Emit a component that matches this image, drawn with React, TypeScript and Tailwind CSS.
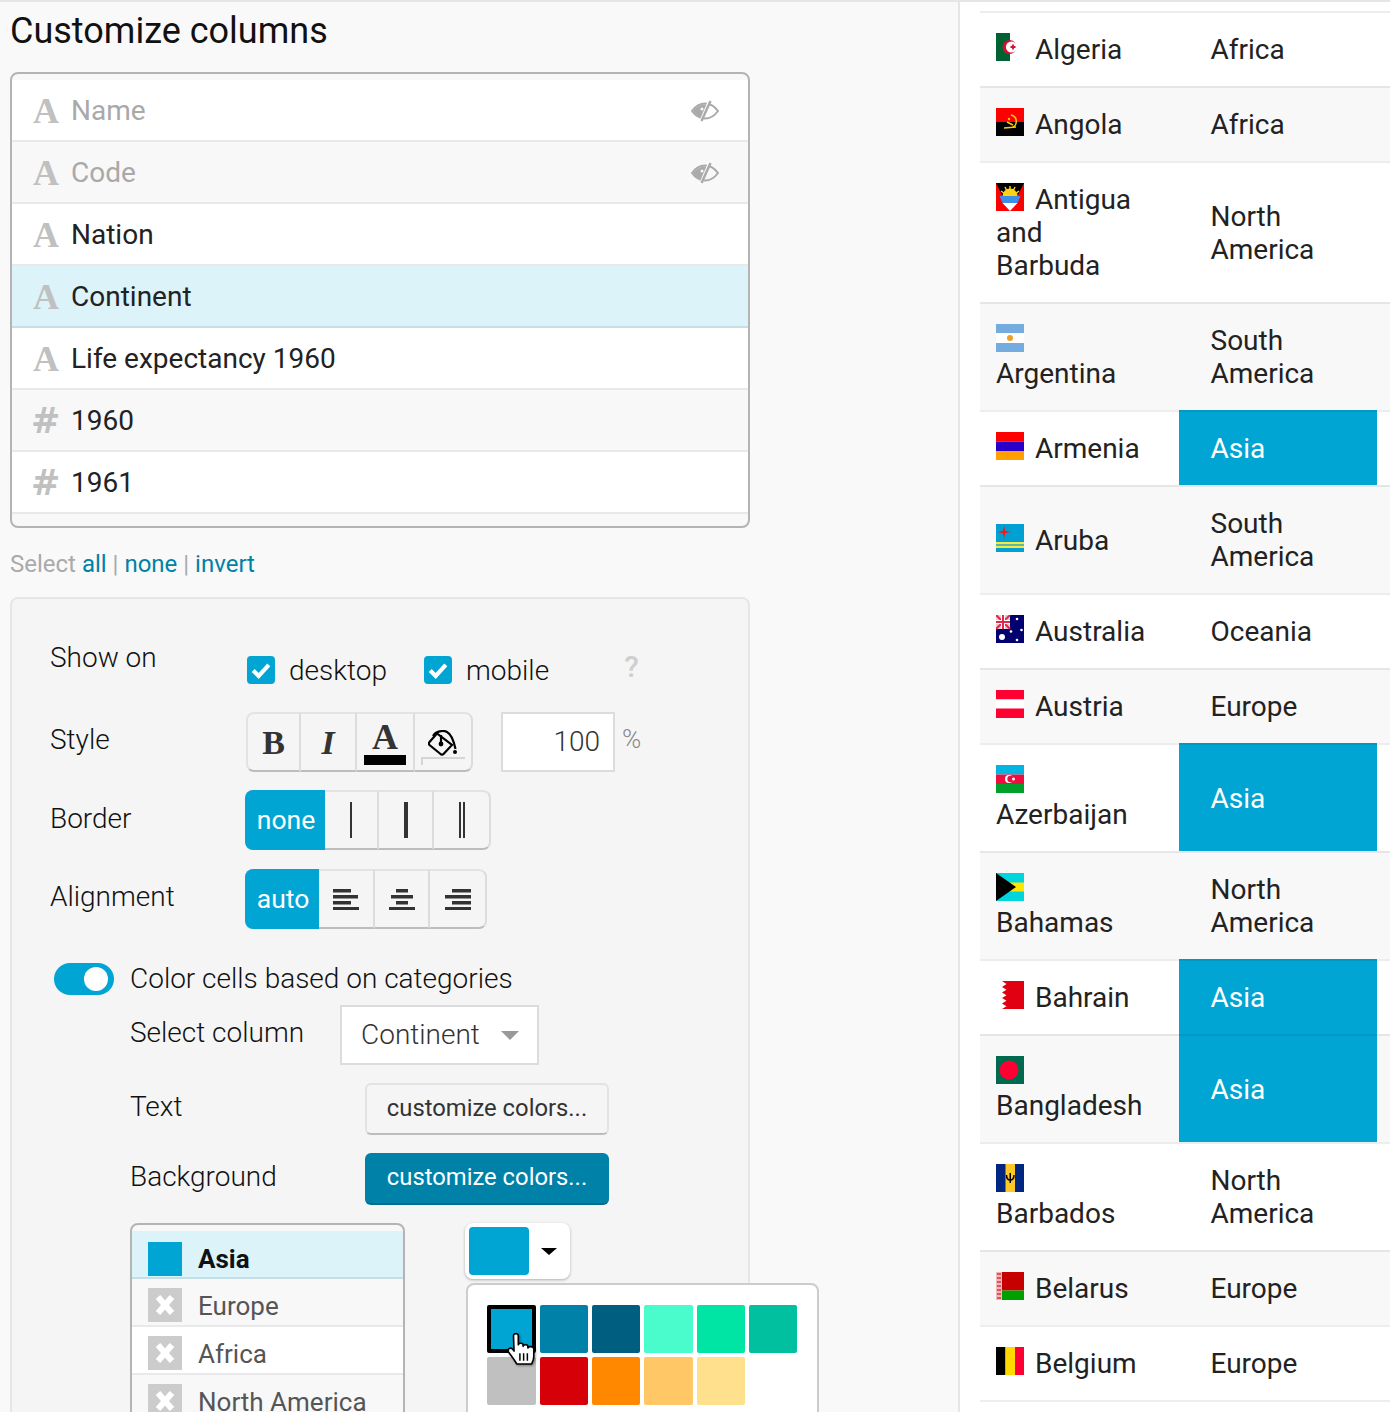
import type { ReactNode } from 'react';

type Country = { name: string; continent: string; flag: ReactNode };

const BLUE = '#00a5d3';

function FlagBox({ children }: { children: ReactNode }) {
  return (
    <svg viewBox="0 0 28 28" className="mr-[11px] inline-block h-[28px] w-[28px] align-[-2px]">
      {children}
    </svg>
  );
}

const countries: Country[] = [
  {
    name: 'Algeria',
    continent: 'Africa',
    flag: (
      <>
        <rect width="14" height="28" fill="#006233" />
        <rect x="14" width="14" height="28" fill="#fff" />
        <circle cx="13.500" cy="14" r="7" fill="#d21034" />
        <circle cx="15.500" cy="14" r="5.600" fill="#fff" />
        <path d="M14.500 14h5M17 11.500v5" stroke="#d21034" strokeWidth="1.800" />
      </>
    ),
  },
  {
    name: 'Angola',
    continent: 'Africa',
    flag: (
      <>
        <rect width="28" height="14" fill="#ff0000" />
        <rect y="14" width="28" height="14" fill="#000" />
        <path d="M15 7a6.500 6.500 0 0 1 1 12.500M8 20l12-1M11 14l6 3" stroke="#ffcb00" strokeWidth="1.500" fill="none" />
        <circle cx="13" cy="11" r="1.200" fill="#ffcb00" />
      </>
    ),
  },
  {
    name: 'Antigua and Barbuda',
    continent: 'North America',
    flag: (
      <>
        <rect width="28" height="28" fill="#ff0000" />
        <path d="M0 0h28L14 28z" fill="#000" />
        <path d="M6.500 13a7.500 7.500 0 0 1 15 0z" fill="#fcd116" />
        <path d="M5 8l4 3M23 8l-4 3M14 3v5M9 4l2 4M19 4l-2 4" stroke="#fcd116" strokeWidth="1.500" />
        <path d="M3.500 13h21l-3 7h-15z" fill="#3b8fe6" />
        <path d="M6.500 20h15L14 28z" fill="#fff" />
      </>
    ),
  },
  {
    name: 'Argentina',
    continent: 'South America',
    flag: (
      <>
        <rect width="28" height="28" fill="#74acdf" />
        <rect y="9" width="28" height="10" fill="#fff" />
        <circle cx="14" cy="14" r="3" fill="#eba12a" />
      </>
    ),
  },
  {
    name: 'Armenia',
    continent: 'Asia',
    flag: (
      <>
        <rect width="28" height="9.500" fill="#ff0000" />
        <rect y="9.500" width="28" height="9.500" fill="#2a00c8" />
        <rect y="19" width="28" height="9" fill="#ff9f00" />
      </>
    ),
  },
  {
    name: 'Aruba',
    continent: 'South America',
    flag: (
      <>
        <rect width="28" height="28" fill="#00a0d2" />
        <rect y="18" width="28" height="2" fill="#f5e94a" />
        <rect y="22" width="28" height="2" fill="#f5e94a" />
        <rect y="20" width="28" height="2" fill="#5fb8a0" />
        <path d="M6.500 1.500l1.200 5.300 5.300 1.200-5.300 1.200-1.200 5.300-1.200-5.300L0 8l5.300-1.200z" fill="#ed1c24" transform="translate(1.500 0)" />
      </>
    ),
  },
  {
    name: 'Australia',
    continent: 'Oceania',
    flag: (
      <>
        <rect width="28" height="28" fill="#00006e" />
        <rect width="14" height="14" fill="#f4c6cf" />
        <path d="M0 0l14 14M14 0L0 14" stroke="#e0284a" strokeWidth="2" />
        <path d="M7 0v14M0 7h14" stroke="#fff" strokeWidth="4" />
        <path d="M7 0v14M0 7h14" stroke="#e0284a" strokeWidth="2" />
        <circle cx="6" cy="22" r="3" fill="#fff" />
        <circle cx="21" cy="4" r="1.300" fill="#fff" />
        <circle cx="25.500" cy="15" r="1.300" fill="#fff" />
        <circle cx="15" cy="16.500" r="1.300" fill="#fff" />
        <circle cx="21" cy="25" r="1.300" fill="#fff" />
      </>
    ),
  },
  {
    name: 'Austria',
    continent: 'Europe',
    flag: (
      <>
        <rect width="28" height="9.500" fill="#ff0033" />
        <rect y="9.500" width="28" height="9" fill="#fff" />
        <rect y="18.500" width="28" height="9.500" fill="#ff0033" />
      </>
    ),
  },
  {
    name: 'Azerbaijan',
    continent: 'Asia',
    flag: (
      <>
        <rect width="28" height="9.500" fill="#00b5e2" />
        <rect y="9.500" width="28" height="9.500" fill="#ef0f3e" />
        <rect y="19" width="28" height="9" fill="#00a02a" />
        <circle cx="13" cy="14" r="4" fill="#fff" />
        <circle cx="14.500" cy="14" r="3.200" fill="#ef0f3e" />
        <circle cx="17.500" cy="14" r="1.500" fill="#fff" />
      </>
    ),
  },
  {
    name: 'Bahamas',
    continent: 'North America',
    flag: (
      <>
        <rect width="28" height="28" fill="#00d4dc" />
        <rect y="9.500" width="28" height="9" fill="#ffe500" />
        <path d="M0 0l20 14L0 28z" fill="#000" />
      </>
    ),
  },
  {
    name: 'Bahrain',
    continent: 'Asia',
    flag: (
      <>
        <rect width="28" height="28" fill="#e10011" />
        <path d="M0 0h6L10.500 3 6 6l4.500 2.800L6 11.500l4.500 2.800L6 17l4.500 2.800L6 22.500l4.500 2.800L6 28H0z" fill="#fff" />
      </>
    ),
  },
  {
    name: 'Bangladesh',
    continent: 'Asia',
    flag: (
      <>
        <rect width="28" height="28" fill="#006a4e" />
        <circle cx="13" cy="14" r="9.500" fill="#ff0033" />
      </>
    ),
  },
  {
    name: 'Barbados',
    continent: 'North America',
    flag: (
      <>
        <rect width="28" height="28" fill="#00267f" />
        <rect x="9.500" width="9.500" height="28" fill="#ffc726" />
        <path d="M14.250 9v10M10.500 11c0 4 1.500 5 3.750 5s3.750-1 3.750-5" stroke="#000" strokeWidth="1.500" fill="none" />
      </>
    ),
  },
  {
    name: 'Belarus',
    continent: 'Europe',
    flag: (
      <>
        <rect width="28" height="18.500" fill="#c60000" />
        <rect y="18.500" width="28" height="9.500" fill="#00a000" />
        <rect width="6" height="28" fill="#f2b8bc" />
        <path d="M1 2h4M1 6h4M1 10h4M1 14h4M1 18h4M1 22h4M1 26h4" stroke="#d4343f" strokeWidth="1.600" />
      </>
    ),
  },
  {
    name: 'Belgium',
    continent: 'Europe',
    flag: (
      <>
        <rect width="9.500" height="28" fill="#000" />
        <rect x="9.500" width="9.500" height="28" fill="#ffd900" />
        <rect x="19" width="9" height="28" fill="#ff0033" />
      </>
    ),
  },
];

function TypeIcon({ kind }: { kind: 'text' | 'number' }) {
  if (kind === 'number') {
    return <span className="-ml-[2px] w-[40px] text-[35px] font-bold leading-none text-[#c0c0c0] [font-family:'DejaVu_Sans',sans-serif]">#</span>;
  }
  return <span className="w-[38px] text-[36px] font-bold leading-none text-[#c0c0c0] [font-family:'Liberation_Serif',serif]">A</span>;
}

function HiddenEye() {
  return (
    <svg viewBox="0 0 28 22" className="-ml-[1px] h-[22px] w-[28px]">
      <path d="M1 11C5 5.500 9 3.500 14 3.500S23 5.500 27 11C23 16.500 19 18.500 14 18.500S5 16.500 1 11z" fill="none" stroke="#aaa" strokeWidth="2" />
      <path d="M2 11C6 6 10 4.500 15 4.500c.6 5-.5 9.500-2.500 13.500C8 17.500 5 15.500 2 11z" fill="#aaa" />
      <circle cx="11" cy="9" r="1.500" fill="#f8f8f8" />
      <path d="M19 0L9.500 22" stroke="#fff" strokeWidth="3" />
      <path d="M19.500 1L10.500 21" stroke="#aaa" strokeWidth="2.500" />
    </svg>
  );
}

function ColumnRow({
  label,
  kind,
  alt,
  hidden,
  active,
}: {
  label: string;
  kind: 'text' | 'number';
  alt?: boolean;
  hidden?: boolean;
  active?: boolean;
}) {
  const bg = active
    ? 'bg-[#dcf3fa] border-[#c5dfe8]'
    : alt
      ? 'bg-[#f8f8f8] border-[#e9e9e9]'
      : 'bg-white border-[#e9e9e9]';
  return (
    <div className={`flex h-[62px] shrink-0 items-center border-b-2 pl-[21px] pr-[29px] pt-[2px] ${bg}`}>
      <TypeIcon kind={kind} />
      <span className={`flex-1 text-[28px] ${hidden ? 'text-[#a9a9a9]' : 'text-[#222]'}`}>{label}</span>
      {hidden && <HiddenEye />}
    </div>
  );
}

function FormRow({ label, className, labelClass, children }: { label: string; className: string; labelClass?: string; children: ReactNode }) {
  return (
    <div className={`flex items-start ${className}`}>
      <div className={`w-[233px] pl-[38px] text-[28px] font-light leading-[33px] text-[#111] ${labelClass ?? ''}`}>{label}</div>
      {children}
    </div>
  );
}

function Check({ label }: { label: string }) {
  return (
    <div className="flex items-center">
      <span className="flex h-[28px] w-[28px] items-center justify-center rounded-[4px] bg-[#00a5d3]">
        <svg viewBox="0 0 24 24" className="h-[22px] w-[22px]" fill="none" stroke="#fff" strokeWidth="4.500">
          <path d="M3.500 12.500l6 6L20.500 6.500" />
        </svg>
      </span>
      <span className="ml-[14px] mt-[2px] text-[28px] font-light leading-[33px] text-[#111]">{label}</span>
    </div>
  );
}

function GroupCell({ w, first, last, active, children }: { w: string; first?: boolean; last?: boolean; active?: boolean; children: ReactNode }) {
  return (
    <div
      className={`flex h-[60px] items-center justify-center ${w} ${first ? 'rounded-l-[8px]' : ''} ${last ? 'rounded-r-[8px]' : ''} ${
        active
          ? 'bg-[#00a5d3] pl-[2px] text-[26.5px] text-white'
          : `border-y-2 border-t-[#e3e3e3] border-b-[#bdbdbd] border-r-2 border-r-[#dcdcdc] bg-[#f5f5f5] text-[#333] ${first ? 'border-l-2 border-l-[#e3e3e3]' : ''}`
      }`}
    >
      {children}
    </div>
  );
}

function AlignIcon({ rows }: { rows: [number, number][] }) {
  return (
    <svg viewBox="0 0 26 21" className="h-[21px] w-[26px]">
      {rows.map(([x, w], i) => (
        <rect key={i} x={x} y={i * 6} width={w} height="3.500" fill="#333" />
      ))}
    </svg>
  );
}

function CategoryRow({ label, alt }: { label: string; alt?: boolean }) {
  return (
    <div className={`flex h-[48px] shrink-0 items-end border-b-2 border-[#e9e9e9] pb-[3px] pl-[16px] ${alt ? 'bg-[#f8f8f8]' : 'bg-white'}`}>
      <span className="flex h-[34px] w-[34px] items-center justify-center bg-[#cccccc]">
        <svg viewBox="0 0 24 24" className="h-[24px] w-[24px]" stroke="#fff" strokeWidth="6">
          <path d="M5 4l14 16M19 4L5 20" />
        </svg>
      </span>
      <span className="ml-[16px] h-[34px] text-[26px] leading-[36px] text-[#555]">{label}</span>
    </div>
  );
}

function Swatch({ color, w, selected }: { color: string; w: string; selected?: boolean }) {
  return (
    <div
      className={`h-[48px] rounded-[2px] ${w} ${selected ? 'border-[4px] border-black' : ''}`}
      style={{ backgroundColor: color }}
    />
  );
}

function HandCursor() {
  return (
    <svg viewBox="0 0 27 30" className="absolute left-[20px] top-[28px] h-[32px] w-[29px] drop-shadow-[1px_1px_1px_rgba(0,0,0,0.4)]">
      <path
        d="M6 2.500C6 0 10.500 0 10.500 2.500V11C11 9 15 9 15 11.500V12.500C15.500 10.500 19.500 10.500 19.500 13V14C20 12 25 12.500 25 15V22C25 25 24 27 23 29H9C8 27 6 24 1.500 18C0 15 3 13 5 15L6.500 17Z"
        fill="#fff"
        stroke="#000"
        strokeWidth="1.500"
        strokeLinejoin="round"
      />
      <path d="M12 19v7M15.500 19v7M19 19v7" stroke="#000" strokeWidth="1.400" />
    </svg>
  );
}

export default function App() {
  return (
    <div className="flex h-[1412px] w-[1390px] overflow-hidden border-t-2 border-[#e6e6e6] bg-[#f9f9f9] [font-family:Roboto,sans-serif]">
      <div className="h-full w-[958px] shrink-0 pl-[10px]">
        <h1 className="mt-[8px] text-[36px] font-normal leading-[42px] text-[#111]">Customize columns</h1>

        <div className="mt-[20px] flex h-[456px] w-[740px] flex-col overflow-hidden rounded-[8px] border-2 border-[#b4b4b4] bg-[#f8f8f8] pt-[6px]">
          <ColumnRow label="Name" kind="text" hidden />
          <ColumnRow label="Code" kind="text" alt hidden />
          <ColumnRow label="Nation" kind="text" />
          <ColumnRow label="Continent" kind="text" active />
          <ColumnRow label="Life expectancy 1960" kind="text" />
          <ColumnRow label="1960" kind="number" alt />
          <ColumnRow label="1961" kind="number" />
        </div>

        <div className="mt-[21px] text-[24px] leading-[30px] text-[#aaa]">
          Select <a className="text-[#0081a7]">all</a> | <a className="text-[#0081a7]">none</a> | <a className="text-[#0081a7]">invert</a>
        </div>

        <div className="relative mt-[18px] h-[840px] w-[740px] rounded-[8px] border-2 border-[#e6e6e6] bg-[#f5f5f5]">
          <FormRow label="Show on" className="pt-[42px]">
            <div className="mt-[9px] flex items-center">
              <div className="ml-[2px] w-[177px]"><Check label="desktop" /></div>
              <Check label="mobile" />
              <span className="-mt-[6px] ml-[75px] text-[30px] font-medium text-[#cfcfcf]">?</span>
            </div>
          </FormRow>

          <FormRow label="Style" className="mt-[23px]" labelClass="mt-[11px]">
            <div className="ml-[1px] flex items-start">
              <div className="flex rounded-[8px] [font-family:'Liberation_Serif',serif]">
                <GroupCell w="w-[55px]" first><span className="text-[34px] font-bold">B</span></GroupCell>
                <GroupCell w="w-[56px]"><span className="text-[34px] font-bold italic">I</span></GroupCell>
                <GroupCell w="w-[58px]">
                  <span className="flex flex-col items-center pt-[2px]">
                    <span className="text-[36px] font-bold leading-[30px]">A</span>
                    <span className="mt-[3px] h-[10px] w-[42px] bg-black" />
                  </span>
                </GroupCell>
                <GroupCell w="w-[58px]" last>
                  <span className="relative flex h-[46px] w-[44px] items-start justify-center">
                    <svg viewBox="0 0 30 26" className="mt-[11px] h-[26px] w-[30px]" fill="none" stroke="#000" strokeWidth="2.200">
                      <path d="M1.500 12L9 3.500 24 15l-8.500 9a2 2 0 0 1-3 0L1.500 15a2 2 0 0 1 0-3z" fill="#f5f5f5" />
                      <path d="M5 6C8 1 15 0 19 2s7 10 8.500 17" />
                      <path d="M13 5v8" />
                      <circle cx="13" cy="14" r="1.300" fill="#000" />
                      <circle cx="27" cy="22" r="2" fill="#000" stroke="none" />
                    </svg>
                    <span className="absolute bottom-0 h-[8px] w-full border-l-2 border-t-2 border-[#d5d5d5]" />
                  </span>
                </GroupCell>
              </div>
              <div className="ml-[28px] flex h-[60px] w-[114px] items-center justify-end border-2 border-[#dcdcdc] bg-white pr-[13px] text-[28px] font-light text-[#333]">
                100
              </div>
              <span className="ml-[7px] mt-[8px] text-[26px] font-light text-[#888]">%</span>
            </div>
          </FormRow>

          <FormRow label="Border" className="mt-[18px]" labelClass="mt-[12px]">
            <div className="flex">
              <GroupCell w="w-[80px]" first active>none</GroupCell>
              <GroupCell w="w-[54px]"><span className="h-[36px] w-[2px] bg-[#333]" /></GroupCell>
              <GroupCell w="w-[55px]"><span className="h-[36px] w-[4px] bg-[#333]" /></GroupCell>
              <GroupCell w="w-[57px]" last>
                <span className="h-[36px] w-[6px] border-x-2 border-[#333]" />
              </GroupCell>
            </div>
          </FormRow>

          <FormRow label="Alignment" className="mt-[19px]" labelClass="mt-[11px]">
            <div className="flex">
              <GroupCell w="w-[74px]" first active>auto</GroupCell>
              <GroupCell w="w-[56px]"><AlignIcon rows={[[0, 18], [0, 25], [0, 18], [0, 26]]} /></GroupCell>
              <GroupCell w="w-[55px]"><AlignIcon rows={[[7, 12], [2, 22], [7, 12], [0, 26]]} /></GroupCell>
              <GroupCell w="w-[57px]" last><AlignIcon rows={[[7, 19], [0, 26], [7, 19], [0, 26]]} /></GroupCell>
            </div>
          </FormRow>

          <div className="mt-[33px] flex items-center pl-[42px]">
            <span className="flex h-[32px] w-[60px] items-center justify-end rounded-full bg-[#00a5d3] pr-[6px]">
              <span className="h-[24px] w-[24px] rounded-full bg-white" />
            </span>
            <span className="ml-[16px] text-[28px] font-light leading-[33px] text-[#111]">Color cells based on categories</span>
          </div>

          <div className="mt-[10px] flex items-start pl-[118px]">
            <div className="mt-[11px] w-[210px] text-[28px] font-light leading-[33px] text-[#111]">Select column</div>
            <div className="flex h-[60px] w-[199px] items-center border-2 border-[#dcdcdc] bg-white pl-[19px] text-[28px] font-light text-[#333]">
              Continent
              <span className="ml-[21px] h-0 w-0 border-x-[9px] border-t-[9px] border-x-transparent border-t-[#999]" />
            </div>
          </div>

          <div className="mt-[18px] flex items-start pl-[118px]">
            <div className="mt-[7px] w-[235px] text-[28px] font-light leading-[33px] text-[#111]">Text</div>
            <div className="flex h-[52px] w-[244px] items-center justify-center rounded-[6px] border-2 border-[#e3e3e3] border-b-[#bdbdbd] bg-[#f5f5f5] text-[23.8px] text-[#333]">
              customize colors...
            </div>
          </div>

          <div className="mt-[18px] flex items-start pl-[118px]">
            <div className="mt-[7px] w-[235px] text-[28px] font-light leading-[33px] text-[#111]">Background</div>
            <div className="flex h-[52px] w-[244px] items-center justify-center rounded-[6px] border-b-2 border-[#006d8e] bg-[#0081a7] text-[23.8px] text-white">
              customize colors...
            </div>
          </div>

          <div className="mt-[18px] flex items-start pl-[118px]">
            <div className="h-[220px] w-[275px] overflow-hidden rounded-[8px] border-2 border-[#b4b4b4] bg-[#f8f8f8] pt-[6px]">
              <div className="flex h-[48px] items-end border-b-2 border-[#c5dfe8] bg-[#dcf3fa] pb-[1px] pl-[16px]">
                <span className="h-[34px] w-[34px] bg-[#00a5d3]" />
                <span className="ml-[16px] h-[34px] text-[26px] font-bold leading-[34px] text-[#111]">Asia</span>
              </div>
              <CategoryRow label="Europe" alt />
              <CategoryRow label="Africa" />
              <CategoryRow label="North America" alt />
            </div>
            <div className="ml-[60px] flex h-[56px] w-[105px] items-center rounded-[8px] bg-white pl-[4px] shadow-[0_1px_3px_rgba(0,0,0,0.3)]">
              <span className="h-[48px] w-[60px] rounded-[4px] bg-[#00a5d3]" />
              <span className="ml-[12px] h-0 w-0 border-x-[8px] border-t-[7px] border-x-transparent border-t-black" />
            </div>
          </div>

          <div className="absolute left-[454px] top-[684px] h-[160px] w-[353px] rounded-[8px] border-2 border-[#cccccc] bg-white pl-[19px] pt-[20px]">
            <div className="relative flex gap-[4px]">
              <Swatch color={BLUE} w="w-[49px]" selected />
              <Swatch color="#0081a7" w="w-[48px]" />
              <Swatch color="#005f80" w="w-[48px]" />
              <Swatch color="#4afccb" w="w-[49px]" />
              <Swatch color="#00e5a3" w="w-[48px]" />
              <Swatch color="#00c0a0" w="w-[48px]" />
            </div>
            <div className="mt-[4px] flex gap-[4px]">
              <Swatch color="#c0c0c0" w="w-[49px]" />
              <Swatch color="#d60008" w="w-[48px]" />
              <Swatch color="#ff8800" w="w-[48px]" />
              <Swatch color="#ffc766" w="w-[49px]" />
              <Swatch color="#ffe08c" w="w-[48px]" />
            </div>
            <div className="absolute left-0 top-[20px] ml-[19px]">
              <HandCursor />
            </div>
          </div>
        </div>
      </div>

      <div className="h-full flex-1 border-l-2 border-[#e6e6e6] bg-white pl-[20px] pt-[9px]">
        <div className="border-b-2 border-[#eeeeee]">
          {countries.map((c, i) => {
            const asia = c.continent === 'Asia';
            return (
              <div key={c.name} className={`flex ${i % 2 === 1 ? 'bg-[#f8f8f8]' : 'bg-white'}`}>
                <div className="flex w-[199px] items-center border-t-2 border-black/[0.07] py-[20px] pl-[16px] pr-[32px] text-[28px] leading-[33px] text-[#222]">
                  <div>
                    <FlagBox>{c.flag}</FlagBox>
                    {c.name}
                  </div>
                </div>
                <div
                  className={`flex w-[198px] items-center border-t-2 border-black/[0.07] py-[20px] pl-[31.5px] pr-[32px] text-[28px] leading-[33px] ${
                    asia ? 'bg-[#00a5d3] text-white' : 'text-[#222]'
                  }`}
                >
                  {c.continent}
                </div>
                <div className="flex-1 border-t-2 border-black/[0.07]" />
              </div>
            );
          })}
        </div>
      </div>
    </div>
  );
}
